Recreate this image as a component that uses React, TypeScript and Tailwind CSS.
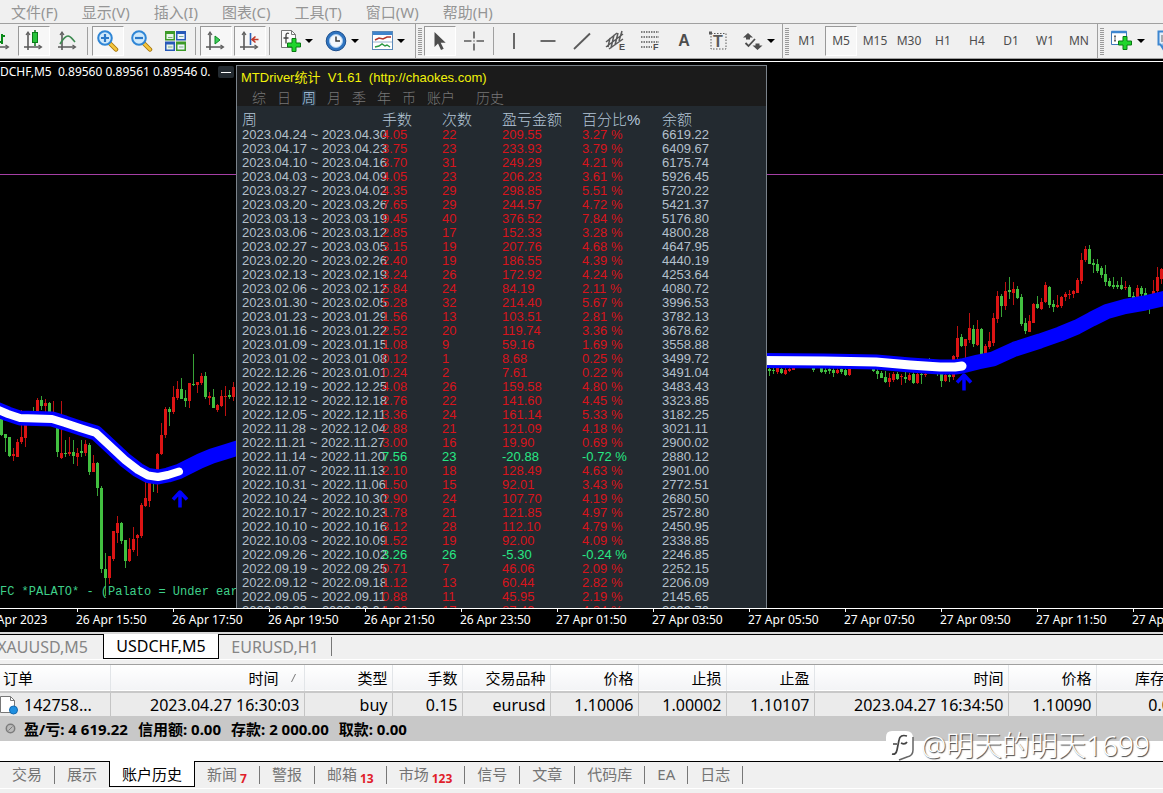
import type { ReactNode } from "react";

type Candle = [x: number, high: number, top: number, bottom: number, low: number, up: 0 | 1];

const candles: Candle[] = [
  [1, 415, 419, 435, 436, 0], [5, 434, 434, 438, 452, 0], [9, 437, 437, 456, 457, 0],
  [13, 448, 454, 456, 461, 1], [17, 439, 442, 457, 457, 1], [21, 410, 437, 442, 444, 1],
  [25, 423, 425, 438, 447, 1], [33, 407, 411, 413, 416, 0], [37, 398, 400, 412, 414, 1],
  [41, 396, 400, 406, 410, 0], [45, 399, 403, 406, 412, 1], [49, 402, 403, 412, 414, 0],
  [53, 401, 412, 414, 416, 1], [57, 426, 428, 452, 457, 0], [61, 401, 453, 458, 459, 1],
  [65, 440, 453, 454, 457, 0], [69, 437, 452, 454, 456, 1], [73, 440, 452, 456, 464, 0],
  [77, 448, 453, 457, 466, 1], [81, 440, 451, 453, 457, 0], [85, 440, 444, 453, 456, 1],
  [89, 443, 445, 472, 475, 0], [93, 455, 463, 472, 472, 1], [97, 462, 463, 488, 496, 0],
  [101, 486, 488, 569, 573, 0], [105, 553, 569, 578, 596, 0], [109, 556, 556, 578, 584, 1],
  [113, 531, 531, 559, 561, 1], [117, 516, 523, 533, 543, 1], [121, 522, 523, 541, 544, 0],
  [125, 540, 540, 561, 568, 0], [129, 538, 549, 561, 562, 1], [133, 527, 539, 550, 552, 1],
  [137, 534, 535, 538, 556, 1], [141, 503, 505, 536, 538, 1], [145, 480, 498, 506, 507, 1],
  [149, 480, 483, 501, 507, 1], [153, 478, 481, 483, 492, 0], [157, 453, 454, 475, 493, 1],
  [161, 423, 435, 454, 455, 1], [165, 407, 409, 435, 438, 1], [169, 407, 409, 412, 426, 0],
  [173, 386, 397, 412, 414, 1], [177, 381, 389, 398, 400, 1], [181, 378, 389, 399, 399, 0],
  [185, 390, 398, 401, 407, 0], [189, 383, 383, 401, 408, 1], [193, 354, 384, 385, 386, 0],
  [197, 382, 382, 385, 393, 1], [201, 373, 376, 383, 385, 1], [205, 372, 376, 397, 399, 0],
  [209, 392, 396, 398, 405, 1], [213, 389, 397, 408, 408, 0], [217, 404, 405, 410, 412, 1],
  [221, 390, 396, 406, 407, 1], [225, 386, 396, 397, 416, 1], [229, 390, 395, 397, 399, 0],
  [233, 382, 387, 397, 401, 1],
  [769, 366, 369, 371, 376, 0], [773, 366, 370, 371, 374, 0], [777, 366, 368, 372, 374, 1],
  [781, 366, 369, 373, 374, 0], [785, 366, 370, 374, 375, 1], [789, 366, 369, 371, 372, 1],
  [793, 366, 368, 370, 370, 1], [813, 366, 368, 370, 372, 0], [821, 366, 368, 372, 373, 0],
  [825, 366, 370, 372, 374, 0], [829, 366, 369, 371, 374, 0], [833, 366, 370, 373, 377, 0],
  [837, 366, 370, 373, 374, 1], [841, 366, 369, 372, 374, 0], [845, 366, 370, 375, 376, 0],
  [849, 366, 369, 375, 376, 1], [873, 368, 369, 371, 372, 0], [877, 368, 371, 374, 379, 0],
  [881, 371, 373, 378, 378, 0], [885, 371, 377, 382, 383, 0], [889, 373, 378, 382, 387, 1],
  [893, 372, 374, 380, 382, 1], [897, 372, 374, 379, 380, 0], [901, 374, 376, 377, 385, 1],
  [905, 372, 377, 379, 383, 0], [909, 373, 375, 380, 381, 1], [913, 372, 374, 383, 384, 0],
  [917, 373, 374, 383, 384, 1], [921, 372, 374, 375, 384, 0], [925, 372, 374, 375, 377, 1],
  [929, 358, 366, 368, 370, 0], [937, 370, 373, 374, 376, 0], [941, 372, 374, 381, 387, 0],
  [945, 373, 375, 381, 382, 1], [949, 372, 375, 377, 382, 0], [953, 372, 374, 377, 380, 1],
  [953, 355, 356, 362, 362, 1], [957, 326, 338, 357, 360, 1], [961, 334, 337, 346, 347, 0],
  [965, 339, 339, 346, 364, 1], [969, 313, 328, 340, 343, 1], [973, 325, 329, 344, 347, 0],
  [977, 320, 329, 345, 346, 1], [981, 328, 329, 354, 355, 0], [985, 344, 346, 354, 356, 1],
  [989, 332, 341, 347, 349, 1], [993, 313, 318, 343, 346, 1], [997, 291, 296, 319, 323, 1],
  [1001, 294, 296, 306, 317, 0], [1005, 282, 291, 306, 310, 1], [1009, 277, 290, 292, 299, 0],
  [1013, 282, 289, 293, 305, 1], [1017, 286, 289, 298, 299, 0], [1021, 294, 297, 324, 326, 0],
  [1025, 318, 323, 331, 334, 0], [1029, 315, 321, 332, 332, 1], [1033, 303, 304, 323, 323, 1],
  [1037, 296, 304, 308, 309, 0], [1041, 298, 302, 309, 310, 1], [1045, 282, 285, 302, 303, 1],
  [1049, 286, 287, 305, 308, 0], [1053, 300, 304, 307, 312, 0], [1057, 295, 305, 307, 308, 1],
  [1061, 296, 297, 306, 308, 1], [1065, 292, 294, 297, 301, 1], [1069, 290, 294, 295, 299, 1],
  [1073, 290, 291, 294, 298, 1], [1077, 278, 280, 293, 293, 1], [1081, 253, 260, 281, 284, 1],
  [1085, 246, 249, 260, 262, 1], [1089, 245, 249, 264, 264, 0], [1093, 259, 263, 265, 273, 0],
  [1097, 259, 264, 271, 273, 0], [1101, 266, 268, 275, 278, 0], [1105, 265, 274, 282, 286, 0],
  [1109, 278, 281, 286, 287, 0], [1113, 277, 285, 287, 289, 0], [1117, 281, 285, 287, 289, 0],
  [1121, 277, 285, 289, 290, 0], [1125, 281, 287, 288, 290, 1], [1129, 285, 287, 297, 297, 0],
  [1133, 292, 296, 298, 299, 0], [1137, 285, 288, 297, 297, 1], [1141, 286, 288, 294, 296, 0],
  [1145, 288, 293, 296, 297, 0], [1149, 296, 298, 302, 314, 0], [1153, 280, 291, 296, 297, 1],
  [1157, 267, 277, 291, 293, 1], [1161, 268, 269, 279, 284, 1],
];

type Week = [range: string, lots: string, count: string, profit: string, percent: string, balance: string];

const weeks: Week[] = [
  ["2023.04.24 ~ 2023.04.30", "4.05", "22", "209.55", "3.27 %", "6619.22"],
  ["2023.04.17 ~ 2023.04.23", "3.75", "23", "233.93", "3.79 %", "6409.67"],
  ["2023.04.10 ~ 2023.04.16", "3.70", "31", "249.29", "4.21 %", "6175.74"],
  ["2023.04.03 ~ 2023.04.09", "4.05", "23", "206.23", "3.61 %", "5926.45"],
  ["2023.03.27 ~ 2023.04.02", "4.35", "29", "298.85", "5.51 %", "5720.22"],
  ["2023.03.20 ~ 2023.03.26", "7.65", "29", "244.57", "4.72 %", "5421.37"],
  ["2023.03.13 ~ 2023.03.19", "9.45", "40", "376.52", "7.84 %", "5176.80"],
  ["2023.03.06 ~ 2023.03.12", "2.85", "17", "152.33", "3.28 %", "4800.28"],
  ["2023.02.27 ~ 2023.03.05", "3.15", "19", "207.76", "4.68 %", "4647.95"],
  ["2023.02.20 ~ 2023.02.26", "2.40", "19", "186.55", "4.39 %", "4440.19"],
  ["2023.02.13 ~ 2023.02.19", "3.24", "26", "172.92", "4.24 %", "4253.64"],
  ["2023.02.06 ~ 2023.02.12", "5.84", "24", "84.19", "2.11 %", "4080.72"],
  ["2023.01.30 ~ 2023.02.05", "5.28", "32", "214.40", "5.67 %", "3996.53"],
  ["2023.01.23 ~ 2023.01.29", "1.56", "13", "103.51", "2.81 %", "3782.13"],
  ["2023.01.16 ~ 2023.01.22", "2.52", "20", "119.74", "3.36 %", "3678.62"],
  ["2023.01.09 ~ 2023.01.15", "1.08", "9", "59.16", "1.69 %", "3558.88"],
  ["2023.01.02 ~ 2023.01.08", "0.12", "1", "8.68", "0.25 %", "3499.72"],
  ["2022.12.26 ~ 2023.01.01", "0.24", "2", "7.61", "0.22 %", "3491.04"],
  ["2022.12.19 ~ 2022.12.25", "4.08", "26", "159.58", "4.80 %", "3483.43"],
  ["2022.12.12 ~ 2022.12.18", "2.76", "22", "141.60", "4.45 %", "3323.85"],
  ["2022.12.05 ~ 2022.12.11", "3.36", "24", "161.14", "5.33 %", "3182.25"],
  ["2022.11.28 ~ 2022.12.04", "2.88", "21", "121.09", "4.18 %", "3021.11"],
  ["2022.11.21 ~ 2022.11.27", "3.00", "16", "19.90", "0.69 %", "2900.02"],
  ["2022.11.14 ~ 2022.11.20", "7.56", "23", "-20.88", "-0.72 %", "2880.12"],
  ["2022.11.07 ~ 2022.11.13", "2.10", "18", "128.49", "4.63 %", "2901.00"],
  ["2022.10.31 ~ 2022.11.06", "1.50", "15", "92.01", "3.43 %", "2772.51"],
  ["2022.10.24 ~ 2022.10.30", "2.90", "24", "107.70", "4.19 %", "2680.50"],
  ["2022.10.17 ~ 2022.10.23", "1.78", "21", "121.85", "4.97 %", "2572.80"],
  ["2022.10.10 ~ 2022.10.16", "3.12", "28", "112.10", "4.79 %", "2450.95"],
  ["2022.10.03 ~ 2022.10.09", "1.52", "19", "92.00", "4.09 %", "2338.85"],
  ["2022.09.26 ~ 2022.10.02", "3.26", "26", "-5.30", "-0.24 %", "2246.85"],
  ["2022.09.19 ~ 2022.09.25", "0.71", "7", "46.06", "2.09 %", "2252.15"],
  ["2022.09.12 ~ 2022.09.18", "1.12", "13", "60.44", "2.82 %", "2206.09"],
  ["2022.09.05 ~ 2022.09.11", "0.88", "11", "45.95", "2.19 %", "2145.65"],
  ["2022.08.29 ~ 2022.09.04", "1.26", "17", "87.49", "4.34 %", "2099.70"],
];

const menus = ["文件(F)", "显示(V)", "插入(I)", "图表(C)", "工具(T)", "窗口(W)", "帮助(H)"];
const timeframes = ["M1", "M5", "M15", "M30", "H1", "H4", "D1", "W1", "MN"];
const axisTimes = [
  "26 Apr 2023", "26 Apr 15:50", "26 Apr 17:50", "26 Apr 19:50", "26 Apr 21:50", "26 Apr 23:50", "27 Apr 01:50",
  "27 Apr 03:50", "27 Apr 05:50", "27 Apr 07:50", "27 Apr 09:50", "27 Apr 11:50", "27 Apr 13:50",
];
const panelTabs = ["综", "日", "周", "月", "季", "年", "币"];
const accountTotals = ["盈/亏: 4 619.22", "信用额: 0.00", "存款: 2 000.00", "取款: 0.00"];
const terminalTabs: { label: string; badge?: string; active?: boolean }[] = [
  { label: "交易" }, { label: "展示" }, { label: "账户历史", active: true }, { label: "新闻", badge: "7" },
  { label: "警报" }, { label: "邮箱", badge: "13" }, { label: "市场", badge: "123" }, { label: "信号" },
  { label: "文章" }, { label: "代码库" }, { label: "EA" }, { label: "日志" },
];

function Axes() {
  return (
    <g fill="none" stroke="#5a5a5a" strokeWidth="1.6">
      <path d="M5 3v17M1 17h17" />
      <path d="M3 5l2-3 2 3M15.500 15l3 2-3 2" strokeWidth="1.2" />
    </g>
  );
}

function Icon({ children }: { children: ReactNode }) {
  return (
    <svg width="22" height="22" viewBox="0 0 22 22" className="shrink-0" aria-hidden="true">
      {children}
    </svg>
  );
}

function Plus({ x, y }: { x: number; y: number }) {
  return (
    <path
      transform={`translate(${x} ${y})`}
      d="M5 0.500h4v4.500h4.500v4h-4.500v4.500h-4v-4.500h-4.500v-4h4.500z"
      fill="#1fd52b"
      stroke="#087a12"
    />
  );
}

function Tool({ label, pressed, children }: { label: string; pressed?: boolean; children: ReactNode }) {
  return (
    <button
      type="button"
      aria-label={label}
      aria-pressed={pressed}
      className={
        pressed
          ? "flex h-[30px] w-8 shrink-0 items-center justify-center border border-t-[#999] border-r-white border-b-white border-l-[#999] bg-[#f7f7f7] text-[12px] text-[#4d4d4d]"
          : "flex h-[30px] w-8 shrink-0 items-center justify-center text-[12px] text-[#4d4d4d]"
      }
    >
      {children}
    </button>
  );
}

function DropTool({ label, children }: { label: string; children: ReactNode }) {
  return (
    <button type="button" aria-label={label} className="flex h-[30px] w-11 shrink-0 items-center gap-1 pl-[5px]">
      {children}
      <svg width="8" height="4" viewBox="0 0 8 4" aria-hidden="true">
        <path d="M0 0h8L4 4z" fill="#000" />
      </svg>
    </button>
  );
}

const Sep = () => (
  <div className="h-[28px] w-1 shrink-0 pl-px">
    <div className="h-full w-px bg-[#a0a0a0]" />
  </div>
);
const Edge = () => <div className="h-full w-px shrink-0 bg-[#a0a0a0]" />;
const Grip = () => (
  <div className="h-[27px] w-1 shrink-0 bg-[repeating-linear-gradient(to_bottom,#9a9a9a_0px,#9a9a9a_1px,#f0f0f0_1px,#f0f0f0_2px)]" />
);

function Lens({ plus }: { plus?: boolean }) {
  return (
    <Icon>
      <path d="M13 13.500l6 6" stroke="#a97a10" strokeWidth="4.500" strokeLinecap="round" />
      <path d="M13 13.500l6 6" stroke="#f5c63c" strokeWidth="2.500" strokeLinecap="round" />
      <circle cx="8" cy="8" r="6.800" fill="#cfe9fb" stroke="#2f86d6" strokeWidth="2" />
      <path d={plus ? "M4 8h8M8 4v8" : "M4 8h8"} stroke="#2a78c8" strokeWidth="2.200" />
    </Icon>
  );
}

function Toolbar() {
  return (
    <div className="flex h-[36px] shrink-0 items-center gap-0.5 overflow-hidden border-y border-[#a0a0a0] bg-[#f0f0f0]">
      <button type="button" aria-label="柱状图" className="flex h-[30px] w-4 shrink-0 items-center justify-end overflow-hidden pr-[4px]">
        <Icon>
          <Axes />
          <path d="M12 4v10M9 12h3M12 6h3" stroke="#0a8a1a" strokeWidth="2" fill="none" />
        </Icon>
      </button>
      <Tool label="阴阳烛" pressed>
        <Icon>
          <Axes />
          <path d="M12 0v16" stroke="#0b7a1a" strokeWidth="1.500" />
          <rect x="9.500" y="2.500" width="5" height="10" fill="#27c43a" stroke="#0b7a1a" />
        </Icon>
      </Tool>
      <Tool label="折线图">
        <Icon>
          <Axes />
          <path d="M3 14c3-5 5-8 8-8s4 3 7 6" stroke="#3d8a50" strokeWidth="1.700" fill="none" />
        </Icon>
      </Tool>
      <Sep />
      <Tool label="放大" pressed><Lens plus /></Tool>
      <Tool label="缩小"><Lens /></Tool>
      <Tool label="平铺窗口">
        <Icon>
          <rect x="0" y="1" width="10" height="9.500" fill="#3c9a28" />
          <rect x="11" y="1" width="10" height="9.500" fill="#2759b8" />
          <rect x="0" y="11.500" width="10" height="9.500" fill="#2759b8" />
          <rect x="11" y="11.500" width="10" height="9.500" fill="#3c9a28" />
          <path d="M1.500 4h7v5h-7zM1.500 14.500h7v5h-7z" fill="#e8f4ea" />
          <path d="M12.500 4h7v5h-7zM12.500 14.500h7v5h-7z" fill="#eef4fb" />
          <path d="M3 7.500h4.500M3 17h4.500M14 6.500h4.500M14 17h4.500" stroke="#7fae8a" />
        </Icon>
      </Tool>
      <Sep />
      <Tool label="自动滚动" pressed>
        <Icon>
          <Axes />
          <path d="M10 6l5 4-5 4z" fill="#3ecf5a" stroke="#0c8a22" />
        </Icon>
      </Tool>
      <Tool label="图表平移" pressed>
        <Icon>
          <Axes />
          <path d="M11.500 3v12" stroke="#2a62b8" strokeWidth="1.600" />
          <path d="M13.500 9.500h6M16.500 6.500l-3.500 3 3.500 3" stroke="#c0392b" strokeWidth="1.600" fill="none" />
        </Icon>
      </Tool>
      <Sep />
      <DropTool label="指标">
        <Icon>
          <path d="M2.500 0.500h10l4 4v13h-14z" fill="#fbfbfb" stroke="#777" />
          <path d="M12.500 0.500v4h4" fill="none" stroke="#777" />
          <path d="M10 3.500c-2-.8-3 0-3 2v8M4.500 8h5" fill="none" stroke="#444" strokeWidth="1.300" />
          <Plus x={8} y={8} />
        </Icon>
      </DropTool>
      <DropTool label="时间周期">
        <Icon>
          <circle cx="11" cy="11" r="9.800" fill="#2f74c0" stroke="#1c4f8e" />
          <circle cx="11" cy="11" r="6.500" fill="#f3f8fd" stroke="#a9cdf0" />
          <path d="M11 6.500v4.500h4" stroke="#3a3a3a" strokeWidth="1.500" fill="none" />
        </Icon>
      </DropTool>
      <DropTool label="模板">
        <Icon>
          <rect x="1.500" y="1.500" width="20" height="18" fill="#fff" stroke="#5a88b8" />
          <path d="M2 3.500h19" stroke="#3f84cc" strokeWidth="3" />
          <path d="M2 12h19" stroke="#9ab4d0" />
          <path d="M4 10l4-2 4 1 4-2h4" stroke="#b3352c" strokeWidth="1.500" fill="none" />
          <path d="M4 17l4-1 3-2 3 2 2-1 3 2" stroke="#2c9a43" strokeWidth="1.500" fill="none" />
        </Icon>
      </DropTool>
      <div className="w-px shrink-0" />
      <Edge />
      <Grip />
      <Tool label="光标" pressed>
        <Icon>
          <path d="M5.500 2v15l3.500-3.500 3 6.500 2.700-1.300-3-6h5z" fill="#4d4d4d" />
        </Icon>
      </Tool>
      <Tool label="十字线">
        <Icon><path d="M1 11h7.500M13.500 11h7.500M11 1.500v7M11 13.500v7M10.500 11h1" stroke="#5a5a5a" strokeWidth="1.600" /></Icon>
      </Tool>
      <Sep />
      <Tool label="垂直线">
        <Icon><path d="M11 3v16" stroke="#5a5a5a" strokeWidth="1.800" /></Icon>
      </Tool>
      <Tool label="水平线">
        <Icon><path d="M3.500 11h15" stroke="#5a5a5a" strokeWidth="1.800" /></Icon>
      </Tool>
      <Tool label="趋势线">
        <Icon><path d="M3 19L19 3.500" stroke="#5a5a5a" strokeWidth="1.800" /></Icon>
      </Tool>
      <Tool label="等距通道">
        <Icon>
          <path d="M1 12L12 3M1 17L18 4M4 19L18 9M5 8l-2 9M9 5l-3 13M13 3l-3 12M17 1l-3 10" stroke="#5a5a5a" strokeWidth="1.500" fill="none" />
          <text x="14" y="20" className="font-['Liberation_Sans',sans-serif] text-[9px] font-bold" fill="#4d4d4d">E</text>
        </Icon>
      </Tool>
      <Tool label="斐波纳契回调">
        <Icon>
          <path d="M2 2h18M2 7h18M2 12h18M2 17h11" stroke="#5a5a5a" strokeWidth="1.500" strokeDasharray="1.500 1" />
          <text x="14" y="20" className="font-['Liberation_Sans',sans-serif] text-[9px] font-bold" fill="#4d4d4d">F</text>
        </Icon>
      </Tool>
      <Tool label="文字"><span className="font-['Liberation_Sans',sans-serif] text-[16px] font-bold">A</span></Tool>
      <Tool label="文字标签">
        <Icon>
          <rect x="4" y="3.500" width="15" height="15.500" fill="none" stroke="#5a5a5a" strokeDasharray="1.500 1.500" />
          <rect x="2" y="1.500" width="3" height="3" fill="#5a5a5a" />
          <text x="6" y="17" className="font-['Liberation_Sans',sans-serif] text-[16px] font-bold" fill="#5a5a5a">T</text>
        </Icon>
      </Tool>
      <DropTool label="箭头">
        <Icon>
          <path d="M7 3l5 4.500h-3v2h-4v-2h-3zM16.500 20l-5-4.500h3v-2h4v2h3z" fill="#4d4d4d" />
          <path d="M4.500 13l3 3L14 9" fill="none" stroke="#4d4d4d" strokeWidth="1.800" />
        </Icon>
      </DropTool>
      <Edge />
      <Grip />
      {timeframes.map((t) => (
        <Tool key={t} label={t} pressed={t === "M5"}>{t}</Tool>
      ))}
      <Edge />
      <Grip />
      <DropTool label="新订单">
        <Icon>
          <path d="M0.500 1.500h15v13h-15z" fill="#fff" stroke="#3d78b8" />
          <path d="M0.500 2h15" stroke="#3d86d0" strokeWidth="2.500" />
          <path d="M4 5v7M3 6.500h2M3 10.500h2" stroke="#666" />
          <Plus x={7} y={6} />
        </Icon>
      </DropTool>
      <button type="button" aria-label="智能交易" className="flex h-[30px] w-8 shrink-0 items-center pl-[5px]">
        <Icon>
          <path d="M1.500 1.500h18v13h-13v5l-3-5h-2z" fill="#e4f1fc" stroke="#3d86d0" strokeWidth="2" />
          <path d="M5 5v7" stroke="#666" />
        </Icon>
      </button>
    </div>
  );
}

const whitePathLeft = "M-4 409L8 414L20 418L52 419L65 423L80 428L96 433L110 446L125 460L138 470L148 475.500L158 477L168 475L179 471.500";
const blueLeft = `${whitePathLeft}L190 466L200 461L212 456L225 452L244 446`;
const whitePathRight = "M760 360.500L824 361L876 362L910 365L940 367L955 367L962 366";
const blueRight = `${whitePathRight}L978 362L993 359L1015 349L1040 341L1060 334L1077 327L1092 319L1107 311.500L1125 306.500L1145 303L1170 297`;

function Arrow({ x, y }: { x: number; y: number }) {
  return (
    <path
      transform={`translate(${x} ${y})`}
      d="M0 17.500V2M-7 9.500L0 2L7 9.500"
      fill="none"
      stroke="#0000ff"
      strokeWidth="3.500"
    />
  );
}

function ChartCanvas() {
  return (
    <svg className="absolute inset-0 size-full" aria-hidden="true">
      <g transform="translate(0 -62)" shapeRendering="crispEdges">
        <rect x="0" y="174" width="100%" height="1" fill="#a53fa5" />
        {candles.map(([x, high, top, bottom, low, up], i) => (
          <g key={i} fill={up ? "#dc1414" : "#42c040"}>
            <rect x={x} y={high} width="1" height={Math.max(low - high, 1)} opacity="0.85" />
            <rect x={x - 1} y={top} width="3" height={Math.max(bottom - top, 1)} />
          </g>
        ))}
      </g>
      <g transform="translate(0 -62)" fill="none" strokeLinejoin="round">
        <path d={blueLeft} stroke="#0000ff" strokeWidth="15" />
        <path d={whitePathLeft} stroke="#fff" strokeWidth="8" strokeLinecap="round" />
        <path d={blueRight} stroke="#0000ff" strokeWidth="15" />
        <path d={whitePathRight} stroke="#fff" strokeWidth="9" strokeLinecap="round" />
        <Arrow x={180} y={490} />
        <Arrow x={964} y={373} />
      </g>
    </svg>
  );
}

function StatsPanel() {
  return (
    <aside className="absolute top-[3px] bottom-0 left-[236px] w-[531px] overflow-hidden border border-b-0 border-[#7b838b] bg-[#232a30] font-['Liberation_Sans','Noto_Sans_CJK_SC',sans-serif] text-[13px] text-[#b4c6d8]">
      <header className="h-10 bg-[#1b1b1b]">
        <h1 className="h-[23px] pl-1 leading-[23px] whitespace-pre text-[#f2f20a]">{"MTDriver统计  V1.61  (http://chaokes.com)"}</h1>
        <nav className="flex h-[17px] items-center gap-[11px] pl-[15px] text-[14px] leading-[16px] font-light text-[#777]">
          {panelTabs.map((t) => (
            <button
              key={t}
              type="button"
              className={t === "周" ? "rounded-xs bg-[#222e38] text-[#b4d0ea]" : ""}
            >
              {t}
            </button>
          ))}
          <button type="button">账户</button>
          <button type="button" className="pl-[10px]">历史</button>
        </nav>
      </header>
      <table className="mt-[5px] w-full table-fixed border-collapse text-left leading-[14px] whitespace-nowrap">
        <colgroup>
          <col className="w-[145px]" />
          <col className="w-[60px]" />
          <col className="w-[60px]" />
          <col className="w-[80px]" />
          <col className="w-[80px]" />
          <col />
        </colgroup>
        <thead>
          <tr className="h-[17px] text-[15px] leading-[17px] text-[#b4c6d8]">
            <th className="p-0 pl-[5px] font-light">周</th>
            <th className="p-0 font-light">手数</th>
            <th className="p-0 font-light">次数</th>
            <th className="p-0 font-light">盈亏金额</th>
            <th className="p-0 font-light">百分比%</th>
            <th className="p-0 font-light">余额</th>
          </tr>
        </thead>
        <tbody>
          {weeks.map(([range, lots, count, profit, percent, balance]) => (
            <tr key={range} className={profit.startsWith("-") ? "h-[14px] text-[#27e884]" : "h-[14px] text-[#d8141c]"}>
              <td className="p-0 pl-[5px] text-[#b4c0cc]">{range}</td>
              <td className="p-0">{lots}</td>
              <td className="p-0">{count}</td>
              <td className="p-0">{profit}</td>
              <td className="p-0">{percent}</td>
              <td className="p-0 text-[#b4c0cc]">{balance}</td>
            </tr>
          ))}
        </tbody>
      </table>
    </aside>
  );
}

const headCell = "border-r border-[#e2e5e8] p-0 pr-1 font-normal";
const cell = "border-r border-[#c4c4c4] p-0 pr-1";

function HistoryTable() {
  return (
    <table className="w-[1184px] table-fixed border-collapse text-right whitespace-nowrap text-black">
      <colgroup>
        <col className="w-[110px]" />
        <col className="w-[194px]" />
        <col className="w-[88px]" />
        <col className="w-[70px]" />
        <col className="w-[88px]" />
        <col className="w-[88px]" />
        <col className="w-[88px]" />
        <col className="w-[88px]" />
        <col className="w-[194px]" />
        <col className="w-[88px]" />
        <col className="w-[88px]" />
      </colgroup>
      <thead>
        <tr className="h-[27px] border-b-2 border-[#c8c8c8] bg-linear-to-b from-white to-[#f3f4f6] text-[15px] leading-[22px]">
          <th className="border-r border-[#e2e5e8] p-0 pl-[3px] text-left font-normal">订单</th>
          <th className="border-r border-[#e2e5e8] p-0 pr-2 font-normal">
            <span className="inline-flex items-center gap-3">
              时间
              <svg width="5" height="8" viewBox="0 0 5 8" aria-hidden="true"><path d="M0.500 8L4.500 0" stroke="#777" /></svg>
            </span>
          </th>
          <th className={headCell}>类型</th>
          <th className={headCell}>手数</th>
          <th className={headCell}>交易品种</th>
          <th className={headCell}>价格</th>
          <th className={headCell}>止损</th>
          <th className={headCell}>止盈</th>
          <th className={headCell}>时间</th>
          <th className={headCell}>价格</th>
          <th className="p-0 pr-1 font-normal">库存费</th>
        </tr>
      </thead>
      <tbody>
        <tr className="h-[24px] bg-[#ebebeb] text-[16px] leading-[22px]">
          <td className={cell}>
            <span className="flex items-center gap-1.5">
              <svg width="18" height="20" viewBox="0 0 18 20" aria-hidden="true">
                <path d="M0.500 1.500h10l4 4v12h-14z" fill="#fff" stroke="#777" />
                <path d="M10.500 1.500v4h4" fill="none" stroke="#777" />
                <circle cx="13.500" cy="15" r="4" fill="#1e8fe0" stroke="#1469ae" />
              </svg>
              142758...
            </span>
          </td>
          <td className={cell}>2023.04.27 16:30:03</td>
          <td className={cell}>buy</td>
          <td className={cell}>0.15</td>
          <td className={cell}>eurusd</td>
          <td className={cell}>1.10006</td>
          <td className={cell}>1.00002</td>
          <td className={cell}>1.10107</td>
          <td className={cell}>2023.04.27 16:34:50</td>
          <td className={cell}>1.10090</td>
          <td className="p-0 pr-1">0.00</td>
        </tr>
        <tr className="h-[25px] bg-[#c8c8c8] text-left text-[15px] leading-[22px] font-bold">
          <td colSpan={11} className="p-0 pl-[5px]">
            <span className="flex items-center gap-2">
              <svg width="11" height="11" viewBox="0 0 11 11" aria-hidden="true">
                <circle cx="5.500" cy="5.500" r="4.200" fill="#bbb" stroke="#7c7c7c" strokeWidth="1.500" />
                <path d="M3.500 7.500l4-4" stroke="#7c7c7c" />
              </svg>
              <span className="flex gap-2.5">
                {accountTotals.map((t) => (
                  <span key={t}>{t}</span>
                ))}
              </span>
            </span>
          </td>
        </tr>
      </tbody>
    </table>
  );
}

export default function App() {
  return (
    <div className="flex h-screen flex-col overflow-hidden bg-[#f0f0f0] font-['Noto_Sans','Noto_Sans_CJK_SC',sans-serif]">
      <nav className="flex h-[23px] shrink-0 items-center gap-6 pl-[11px] text-[15px] leading-[22px] text-[#959595]">
        {menus.map((m) => (
          <button key={m} type="button">{m}</button>
        ))}
      </nav>
      <Toolbar />

      <main className="flex min-h-0 flex-1 flex-col border-t-2 border-black bg-black">
        <div className="relative min-h-0 flex-1 overflow-hidden border-y border-white">
          <ChartCanvas />
          <div className="absolute top-0 left-0 flex h-5 items-center text-[12px] text-white">
            <span className="whitespace-pre">{"DCHF,M5  0.89560 0.89561 0.89546 0."}</span>
          </div>
          <button
            type="button"
            aria-label="收起"
            className="absolute top-1 left-[218px] flex h-3 w-4 items-center justify-center rounded-xs bg-[#232a30]"
          >
            <span className="h-px w-2.5 bg-white" />
          </button>
          <p className="absolute bottom-2 left-0 font-['Liberation_Mono',monospace] text-[12px] leading-4 whitespace-pre text-[#3fd08a]">
            FC *PALATO* - (Palato = Under eart
          </p>
          <StatsPanel />
        </div>
        <div className="flex h-[23px] shrink-0 overflow-hidden text-[12px] leading-[16px] text-white">
          <div className="-ml-5 flex">
            {axisTimes.map((t) => (
              <span key={t} className="w-24 shrink-0">
                <span className="block h-[3px] w-px translate-x-px bg-white" />
                {t}
              </span>
            ))}
          </div>
        </div>
      </main>

      <nav className="flex h-[28px] shrink-0 border-t-2 border-b border-b-white border-t-[#d8d8d8] text-[16px] leading-[22px] text-[#858585]">
        <div className="flex w-full border-t border-black">
          <button type="button" className="-ml-1 w-[107px] pr-[15px] text-right">XAUUSD,M5</button>
          <button type="button" className="-mt-px h-[25px] w-[116px] border-x border-b border-black bg-white text-black">USDCHF,M5</button>
          <button type="button" className="w-[112px] text-center">EURUSD,H1</button>
          <span className="mt-[2px] h-[19px] w-px bg-[#777]" />
        </div>
      </nav>

      <section className="relative mt-1 shrink-0 border-t border-[#a0a0a0] bg-white">
        <div className="min-h-[96px] overflow-hidden">
          <HistoryTable />
        </div>
        <div className="absolute right-[13px] bottom-0 flex items-center gap-1.5 text-white">
          <svg width="30" height="32" viewBox="0 0 30 32" aria-hidden="true">
            <path d="M7 2h14q7 0 7 7v11q0 7-7 8l-5 3-4-3H7q-6 0-6-6V8q0-6 6-6z" fill="#fff" />
            <path d="M28 8v13q0 6-6 7l-8 3" fill="none" stroke="#666" strokeWidth="1.500" />
            <path d="M22 7q-7-2-8 4l-2 10q-1 5-5 4M8 15h4M16 14q4 2 6-1" fill="none" stroke="#444" strokeWidth="1.700" />
          </svg>
          <span className="text-[28px] leading-8 font-light [text-shadow:1px_1px_1px_#444]">@明天的明天1699</span>
        </div>
      </section>

      <nav className="flex h-[28px] shrink-0 border-t border-b border-t-black border-b-white text-[15px] leading-[24px] text-[#747474]">
        {terminalTabs.map((t) =>
          t.active ? (
            <button key={t.label} type="button" className="-mt-px -ml-px h-[26px] border-x border-b border-black bg-white px-3 text-black">
              {t.label}
            </button>
          ) : (
            <button key={t.label} type="button" className="flex">
              <span className="px-3">
                {t.label}
                {t.badge && <b className="relative top-[3px] ml-[3px] text-[12px] text-[#e0202a]">{t.badge}</b>}
              </span>
              <span className="mt-1 h-[18px] w-px bg-[#777]" />
            </button>
          ),
        )}
      </nav>
      <div className="h-1 shrink-0" />
    </div>
  );
}
